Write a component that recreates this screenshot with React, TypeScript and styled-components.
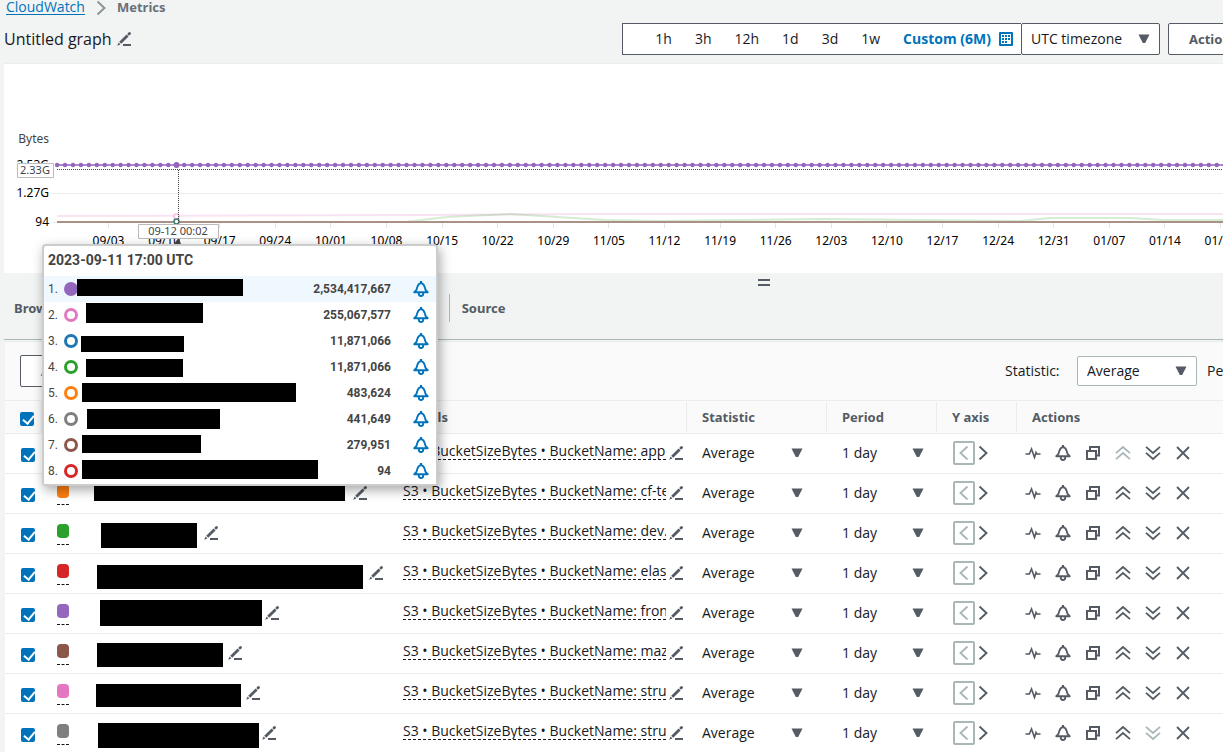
import React from "react";
import styled, { createGlobalStyle } from "styled-components";

const INK = "#16191f";
const SLATE = "#545b64";
const BLUE = "#0073bb";
const MUTED = "#aab7b8";
const LINE = "#eaeded";
const UI_FONT = '"Open Sans", "Noto Sans", sans-serif';
const LABEL_FONT = '"Noto Sans", "Open Sans", sans-serif';

const GlobalStyle = createGlobalStyle`
  * { box-sizing: border-box; }
  html, body { margin: 0; background: #f2f3f3; }
  body { font: 14px/20px ${UI_FONT}; color: ${INK}; overflow: hidden; }
  button, select, input { font: inherit; color: inherit; margin: 0; }
`;

const Viewport = styled.div`
  height: 100vh;
  overflow: hidden;
`;

const Page = styled.main`
  min-width: 1524px;
  padding-left: 4px;
`;

const Breadcrumbs = styled.nav`
  display: flex;
  align-items: center;
  height: 15px;
  padding-left: 2px;
  gap: 11px;
  line-height: 15px;
`;

const CrumbLink = styled.a`
  color: ${BLUE};
  line-height: 14px;
  text-decoration: none;
  border-bottom: 1px solid ${BLUE};
`;

const CrumbCurrent = styled.span`
  color: #687078;
  font: 700 13px/15px ${LABEL_FONT};
`;

const Header = styled.header`
  display: flex;
  align-items: center;
  height: 48px;
`;

const TitleGroup = styled.div`
  display: flex;
  align-items: center;
  gap: 5px;
  width: 618px;
  flex: none;
`;

const Title = styled.h1`
  margin: 0;
  font-size: 16px;
  line-height: 24px;
  font-weight: 400;
`;

const IconButton = styled.button<{ $color?: string }>`
  display: flex;
  flex: none;
  padding: 0;
  border: 0;
  background: none;
  color: ${(p) => p.$color || SLATE};
`;

const RangeBar = styled.div`
  display: flex;
  align-items: center;
  justify-content: flex-end;
  gap: 23px;
  width: 399px;
  height: 32px;
  padding-right: 8px;
  background: #fff;
  border: 1px solid ${SLATE};
  border-right: 0;
`;

const RangeButton = styled.button<{ $active?: boolean }>`
  display: flex;
  align-items: center;
  gap: 8px;
  padding: 0;
  border: 0;
  background: none;
  white-space: nowrap;
  color: ${(p) => (p.$active ? BLUE : INK)};
  font-weight: ${(p) => (p.$active ? 700 : 400)};
`;

const Dropdown = styled.span<{ $width: number; $boxed?: string; $pad?: number }>`
  display: flex;
  align-items: center;
  width: ${(p) => p.$width}px;
  height: ${(p) => (p.$boxed ? "100%" : "20px")};
  padding: 0 ${(p) => p.$pad ?? 0}px;
  background: ${(p) => (p.$boxed ? "#fff" : "none")};
  border: ${(p) => (p.$boxed ? `1px solid ${p.$boxed}` : "0")};
  border-radius: 2px;
  color: ${INK};

  select {
    appearance: none;
    flex: 1;
    min-width: 0;
    padding: 0;
    border: 0;
    background: none;
    line-height: 20px;
  }
  svg { flex: none; color: ${SLATE}; }
`;

const HeaderSelect = styled.div`
  height: 32px;
  margin-right: 8px;
`;

const OutlineButton = styled.button`
  height: 32px;
  padding: 0 20px;
  background: #fff;
  border: 1px solid ${SLATE};
  border-radius: 2px;
  color: ${SLATE};
  font: 700 13px/20px ${LABEL_FONT};
  white-space: nowrap;
`;

const GraphPanel = styled.section`
  height: 210px;
  background: #fff;
  border-top: 1px solid ${LINE};

  svg { display: block; width: 100%; height: 208px; overflow: visible; }
`;

const TabStrip = styled.div`
  display: flex;
  flex-direction: column;
  align-items: center;
  height: 67px;
  padding-top: 6px;
  border-bottom: 1px solid ${MUTED};
`;

const DragHandle = styled.div`
  width: 12px;
  height: 7px;
  border: solid ${SLATE};
  border-width: 2px 0;
`;

const Tabs = styled.div`
  display: flex;
  align-self: stretch;
  margin-top: 8px;
`;

const Tab = styled.button`
  height: 28px;
  padding: 0 12px;
  border: 0;
  border-right: 1px solid ${MUTED};
  background: none;
  color: ${SLATE};
  font: 700 13px/20px ${LABEL_FONT};
  white-space: nowrap;

  &:first-child { padding-left: 10px; }
  &:last-child { border-right: 0; }
`;

const MetricsPanel = styled.section`
  margin: 1px 0 0 1px;
  border-top: 1px solid ${LINE};
  background: #fafafa;
`;

const PanelTools = styled.div`
  display: flex;
  align-items: center;
  height: 58px;
  padding-left: 15px;
`;

const ToolFields = styled.div`
  display: flex;
  align-items: center;
  gap: 10px;
  height: 30px;
  margin-left: auto;
  width: 519px;
`;

const FieldLabel = styled.label`
  display: flex;
  align-items: center;
  justify-content: space-between;
  width: 192px;
  height: 100%;
`;

const MetricsTable = styled.table`
  width: 100%;
  table-layout: fixed;
  border-collapse: separate;
  border-spacing: 0;
`;

const HeadCell = styled.th`
  height: 34px;
  padding: 0 0 0 15px;
  text-align: left;
  color: ${SLATE};
  font: 700 13px/20px ${LABEL_FONT};
  border-top: 1px solid ${LINE};
  border-bottom: 1px solid ${LINE};
  background: linear-gradient(${LINE}, ${LINE}) right center / 1px 30px no-repeat;

  &:nth-child(2), &:nth-child(3), &:last-child { background: none; }
`;

const Cell = styled.td<{ $left?: number }>`
  height: 40px;
  padding: 0 0 2px ${(p) => p.$left ?? 15}px;
  background: #fff;
  border-bottom: 1px solid ${LINE};
  vertical-align: middle;
`;

const Line = styled.div<{ $gap?: number }>`
  display: flex;
  align-items: center;
  gap: ${(p) => p.$gap ?? 0}px;
  height: 37px;
`;

const Checkbox = styled.input`
  appearance: none;
  display: block;
  width: 14px;
  height: 14px;
  margin: 4px 0 0 1px;
  border-radius: 2px;
  background: ${BLUE};

  th & { margin-left: 0; }

  &::after {
    content: "";
    display: block;
    width: 5px;
    height: 9px;
    margin: 1px 0 0 5px;
    border: solid #fff;
    border-width: 0 2px 2px 0;
    transform: rotate(40deg);
  }
`;

const SwatchButton = styled.button<{ $color: string }>`
  display: block;
  width: 12px;
  height: 21px;
  margin-top: 4px;
  padding: 0;
  border: 0;
  border-bottom: 1px dashed ${INK};
  background: none;

  &::before {
    content: "";
    display: block;
    height: 14px;
    margin-bottom: 6px;
    border-radius: 4px;
    background: ${(p) => p.$color};
  }
`;

const Redaction = styled.span<{ $x: number; $y: number; $w: number; $h: number }>`
  flex: none;
  align-self: flex-start;
  width: ${(p) => p.$w}px;
  height: ${(p) => p.$h}px;
  margin: ${(p) => p.$y}px 0 0 ${(p) => p.$x}px;
  background: #000;
`;

const DetailText = styled.span`
  width: 263px;
  height: 18px;
  line-height: 18px;
  margin-bottom: 4px;
  overflow: hidden;
  white-space: nowrap;
  border-bottom: 1px dashed ${INK};
`;

const AxisButton = styled.button`
  display: flex;
  align-items: center;
  justify-content: center;
  width: 22px;
  height: 24px;
  padding: 0;
  border: 2px solid ${MUTED};
  border-radius: 2px;
  background: #fff;
  color: ${MUTED};
`;

const Tooltip = styled.aside`
  position: absolute;
  left: 42px;
  top: 244px;
  width: 396px;
  height: 242px;
  background: #fff;
  border: 2px solid #ccc;
  border-radius: 4px;
  box-shadow: 2px 4px 12px rgba(0, 0, 0, 0.35);
  color: #444;
  font: 12px/26px Roboto, sans-serif;
`;

const TooltipTitle = styled.div`
  height: 30px;
  padding-left: 4px;
  font-size: 14px;
  line-height: 29px;
  font-weight: 700;
`;

const TooltipRow = styled.div<{ $active: boolean }>`
  display: flex;
  align-items: center;
  height: 26px;
  padding: 0 7px 0 4px;
  background: ${(p) => (p.$active ? "#f0f8ff" : "#fff")};
`;

const Rank = styled.span`
  width: 16px;
`;

const Ring = styled.span<{ $color: string; $filled: boolean }>`
  width: 14px;
  height: 14px;
  border: 3px solid ${(p) => p.$color};
  border-radius: 50%;
  background: ${(p) => (p.$filled ? p.$color : "#fff")};
`;

const Value = styled.span`
  margin: 0 22px 0 auto;
  font-weight: 700;
`;

function Caret() {
  return (
    <svg width="12" height="10" viewBox="0 0 12 10" aria-hidden="true">
      <path d="M.5 .5h11L7.200 9H4.800z" fill="currentColor" />
    </svg>
  );
}

function Pencil() {
  return (
    <svg width="14" height="14" viewBox="0 0 14 14" fill="none" aria-hidden="true">
      <path d="M3.2 10.8L10.6 3.4" stroke="currentColor" strokeWidth="2.8" />
      <path d="M12 2l.5-.5" stroke="currentColor" strokeWidth="2.8" strokeLinecap="round" />
      <path d="M1.6 10.6l1.8 1.8L.2 13.8z" fill="currentColor" />
      <path d="M6 13h8" stroke="currentColor" strokeWidth="2" />
    </svg>
  );
}

function Bell() {
  return (
    <svg width="16" height="16" viewBox="0 0 16 16" fill="none" stroke="currentColor" aria-hidden="true">
      <path d="M8 0v2.500" strokeWidth="2.200" />
      <path
        d="M1.300 11.200h13.400L12.500 8.800C11.800 5.500 11 2.200 8 2.200S4.200 5.500 3.500 8.800z"
        strokeWidth="1.900"
        strokeLinejoin="round"
      />
      <path d="M5.800 12v.8a2.200 2.200 0 0 0 4.400 0V12" strokeWidth="1.900" />
    </svg>
  );
}

function Stroked({ d, width = 1.8 }: { d: string; width?: number }) {
  return (
    <svg width="16" height="16" viewBox="0 0 16 16" fill="none" aria-hidden="true">
      <path d={d} stroke="currentColor" strokeWidth={width} />
    </svg>
  );
}

const PULSE = "M.5 9h3.800L6.500 4l3 8.500 1.500-5 .8 1.500h3.700";
const COPY = "M2 6h9v8H2zM5 5.500V2h9v8.500h-3";
const UP = "M1 8.200L8 2l7 6.200M1 14.200L8 8l7 6.200";
const DOWN = "M1 1.800L8 8l7-6.200M1 7.800L8 14l7-6.200";
const CLOSE = "M2 2l12 12M14 2L2 14";

function Chevron({ left }: { left?: boolean }) {
  return (
    <svg width="10" height="14" viewBox="0 0 10 14" fill="none" aria-hidden="true">
      <path d={left ? "M8.500 .5L1.500 7l7 6.500" : "M1.500 .5l7 6.500-7 6.500"} stroke="currentColor" strokeWidth="1.900" />
    </svg>
  );
}

function Calendar() {
  return (
    <svg width="14" height="14" viewBox="0 0 14 14" aria-hidden="true">
      <rect width="14" height="14" rx="1" fill={BLUE} />
      <path d="M2 2h10v10H2z" fill="#fff" />
      <path d="M3 3h2v2H3zM6 3h2v2H6zM9 3h2v2H9zM3 6h2v2H3zM6 6h2v2H6zM9 6h2v2H9zM3 9h2v2H3zM6 9h2v2H6z" fill={BLUE} />
    </svg>
  );
}

const WEEKS = [
  "09/03", "09/10", "09/17", "09/24", "10/01", "10/08", "10/15", "10/22", "10/29", "11/05", "11/12",
  "11/19", "11/26", "12/03", "12/10", "12/17", "12/24", "12/31", "01/07", "01/14", "01/21",
];
const WEEK_STEP = 55.6;
const DAYS = Array.from({ length: 160 }, (_, i) => 57.1 + (i * WEEK_STEP) / 7);

function Graph() {
  return (
    <svg role="img" aria-label="Bucket size in bytes over six months" fontFamily={LABEL_FONT} fontSize="12" fill="#000">
      <g transform="translate(-4 -64)">
        <path d="M52 193.500H1520M52 222.500H58" stroke="#ececec" />
        <text x="49" y="143" textAnchor="end" fill="#444">Bytes</text>
        <text x="49" y="169" textAnchor="end">2.53G</text>
        <text x="49" y="197" textAnchor="end">1.27G</text>
        <text x="49" y="226" textAnchor="end">94</text>
        {WEEKS.map((week, i) => (
          <g key={week}>
            <path d={`M${Math.round(108 + i * WEEK_STEP)}.500 223v5`} stroke="#e4e4e4" />
            <text x={108.5 + i * WEEK_STEP} y="245" textAnchor="middle">{week}</text>
          </g>
        ))}
        <path d="M57 216L420 215L600 214H1520" fill="none" stroke="#f9e3f2" strokeWidth="2" />
        <path
          d="M57 222H405L447 217L510 214L605 220L660 221L740 220L820 219L1020 221L1050 218H1130L1163 220H1520"
          fill="none"
          stroke="#2ca02c"
          strokeOpacity=".2"
          strokeWidth="2"
        />
        <path d="M57 222H1520" stroke="#ab9085" strokeWidth="2" />
        <path d="M57 165H1520" stroke="#ac86d0" strokeWidth="2" />
        {DAYS.map((x) => (
          <circle key={x} cx={x} cy="165" r="2.200" fill="#9467bd" />
        ))}
        <circle cx="176.500" cy="165" r="3" fill="#9467bd" />
        <circle cx="176.500" cy="216.500" r="2.500" fill="#fff" stroke="#f2bfe0" strokeWidth="1.500" />
        <circle cx="176.500" cy="221.500" r="2.500" fill="#fff" stroke="#3f7f6f" strokeWidth="1.500" />
        <path d="M57 169.500H1520M178.500 170V223" stroke="#444" strokeDasharray="1 1" />
        <path d="M173 245l5.500-7 3 7z" fill="#444" />
        <path d="M17.500 163.500h36v14h-36zM138.500 224.500h80v14h-80z" fill="#fff" stroke="#bbb" />
        <text x="35" y="174" textAnchor="middle" fontSize="11" fill="#444">2.33G</text>
        <text x="178" y="235" textAnchor="middle" fontSize="11" fill="#444">09-12 00:02</text>
      </g>
    </svg>
  );
}

const READINGS = [
  { color: "#9467bd", value: "2,534,417,667", bar: [-1, 3, 166, 17] },
  { color: "#e377c2", value: "255,067,577", bar: [8, 1, 117, 20] },
  { color: "#1f77b4", value: "11,871,066", bar: [3, 8, 103, 16] },
  { color: "#2ca02c", value: "11,871,066", bar: [8, 5, 97, 18] },
  { color: "#ff7f0e", value: "483,624", bar: [4, 3, 214, 19] },
  { color: "#7f7f7f", value: "441,649", bar: [9, 3, 133, 20] },
  { color: "#8c564b", value: "279,951", bar: [4, 3, 119, 18] },
  { color: "#d62728", value: "94", bar: [4, 2, 236, 19] },
];

// bar: left inset, top inset, width, height of the blacked-out label; gap: space before its edit icon
const METRICS = [
  { color: "#1f77b4", bucket: "app.s", bar: [12, 8, 180, 20], gap: 8 },
  { color: "#ff7f0e", bucket: "cf-te", bar: [12, 8, 251, 19], gap: 8 },
  { color: "#2ca02c", bucket: "dev.s", bar: [19, 9, 96, 25], gap: 7 },
  { color: "#d62728", bucket: "elast", bar: [15, 11, 266, 24], gap: 6 },
  { color: "#9467bd", bucket: "front", bar: [18, 6, 162, 26], gap: 3 },
  { color: "#8c564b", bucket: "maze", bar: [15, 9, 126, 24], gap: 5 },
  { color: "#e377c2", bucket: "strux", bar: [14, 10, 145, 23], gap: 5 },
  { color: "#7f7f7f", bucket: "strux", bar: [16, 9, 161, 25], gap: 3 },
];

const TABS = ["Browse", "Multi source query", "Graphed metrics (8)", "Options", "Source"];

function Bar({ box }: { box: number[] }) {
  return <Redaction $x={box[0]} $y={box[1]} $w={box[2]} $h={box[3]} />;
}

function MetricRow({ metric, index }: { metric: (typeof METRICS)[number]; index: number }) {
  const actions = [
    { name: "Anomaly detection", icon: <Stroked d={PULSE} width={1.6} /> },
    { name: "Create alarm", icon: <Bell /> },
    { name: "Duplicate", icon: <Stroked d={COPY} width={2} /> },
    { name: "Move up", icon: <Stroked d={UP} />, off: index === 0 },
    { name: "Move down", icon: <Stroked d={DOWN} />, off: index === METRICS.length - 1 },
    { name: "Remove", icon: <Stroked d={CLOSE} /> },
  ];
  return (
    <tr>
      <Cell><Checkbox type="checkbox" defaultChecked aria-label={`Show metric ${index + 1}`} /></Cell>
      <Cell><SwatchButton $color={metric.color} aria-label="Change color" /></Cell>
      <Cell $left={0}>
        <Line $gap={metric.gap}>
          <Bar box={metric.bar} />
          <IconButton aria-label="Edit label"><Pencil /></IconButton>
        </Line>
      </Cell>
      <Cell>
        <Line $gap={3}>
          <DetailText>S3 • BucketSizeBytes • BucketName: {metric.bucket}</DetailText>
          <IconButton aria-label="Edit details"><Pencil /></IconButton>
        </Line>
      </Cell>
      <Cell>
        <Dropdown $width={101}>
          <select aria-label="Statistic"><option>Average</option></select>
          <Caret />
        </Dropdown>
      </Cell>
      <Cell>
        <Dropdown $width={82}>
          <select aria-label="Period"><option>1 day</option></select>
          <Caret />
        </Dropdown>
      </Cell>
      <Cell $left={16}>
        <Line $gap={3}>
          <AxisButton disabled aria-label="Left Y axis"><Chevron left /></AxisButton>
          <IconButton aria-label="Right Y axis"><Chevron /></IconButton>
        </Line>
      </Cell>
      <Cell $left={8}>
        <Line $gap={14}>
          {actions.map((a) => (
            <IconButton key={a.name} aria-label={a.name} disabled={a.off} $color={a.off ? MUTED : SLATE}>
              {a.icon}
            </IconButton>
          ))}
        </Line>
      </Cell>
    </tr>
  );
}

export default function App() {
  return (
    <Viewport>
      <GlobalStyle />
      <Page>
        <Breadcrumbs aria-label="Breadcrumb">
          <CrumbLink href="#cloudwatch">CloudWatch</CrumbLink>
          <IconButton as="span" $color="#879596"><Chevron /></IconButton>
          <CrumbCurrent>Metrics</CrumbCurrent>
        </Breadcrumbs>
        <Header>
          <TitleGroup>
            <Title>Untitled graph</Title>
            <IconButton aria-label="Rename graph"><Pencil /></IconButton>
          </TitleGroup>
          <RangeBar>
            {["1h", "3h", "12h", "1d", "3d", "1w"].map((range) => (
              <RangeButton key={range}>{range}</RangeButton>
            ))}
            <RangeButton $active>Custom (6M) <Calendar /></RangeButton>
          </RangeBar>
          <HeaderSelect>
            <Dropdown $width={139} $boxed={SLATE} $pad={9}>
              <select aria-label="Timezone"><option>UTC timezone</option></select>
              <Caret />
            </Dropdown>
          </HeaderSelect>
          <OutlineButton>Actions</OutlineButton>
        </Header>
        <GraphPanel><Graph /></GraphPanel>
        <TabStrip>
          <DragHandle />
          <Tabs role="tablist">
            {TABS.map((tab) => <Tab key={tab} role="tab">{tab}</Tab>)}
          </Tabs>
        </TabStrip>
        <MetricsPanel>
          <PanelTools>
            <OutlineButton>Add math</OutlineButton>
            <ToolFields>
              <FieldLabel>
                Statistic:
                <Dropdown $width={120} $boxed={MUTED} $pad={9}>
                  <select><option>Average</option></select>
                  <Caret />
                </Dropdown>
              </FieldLabel>
              <FieldLabel>
                Period:
                <Dropdown $width={120} $boxed={MUTED} $pad={9}>
                  <select><option>1 day</option></select>
                  <Caret />
                </Dropdown>
              </FieldLabel>
            </ToolFields>
          </PanelTools>
          <MetricsTable>
            <colgroup>
              <col width="37" />
              <col width="40" />
              <col width="306" />
              <col width="299" />
              <col width="140" />
              <col width="110" />
              <col width="80" />
              <col />
            </colgroup>
            <thead>
              <tr>
                <HeadCell><Checkbox type="checkbox" defaultChecked aria-label="Show all metrics" /></HeadCell>
                <HeadCell />
                <HeadCell>Label</HeadCell>
                <HeadCell>Details</HeadCell>
                <HeadCell>Statistic</HeadCell>
                <HeadCell>Period</HeadCell>
                <HeadCell>Y axis</HeadCell>
                <HeadCell>Actions</HeadCell>
              </tr>
            </thead>
            <tbody>
              {METRICS.map((metric, i) => <MetricRow key={metric.color} metric={metric} index={i} />)}
            </tbody>
          </MetricsTable>
        </MetricsPanel>
      </Page>
      <Tooltip>
        <TooltipTitle>2023-09-11 17:00 UTC</TooltipTitle>
        {READINGS.map((r, i) => (
          <TooltipRow key={r.color} $active={i === 0}>
            <Rank>{i + 1}.</Rank>
            <Ring $color={r.color} $filled={i === 0} />
            <Bar box={r.bar} />
            <Value>{r.value}</Value>
            <IconButton aria-label="Create alarm" $color={BLUE}><Bell /></IconButton>
          </TooltipRow>
        ))}
      </Tooltip>
    </Viewport>
  );
}
